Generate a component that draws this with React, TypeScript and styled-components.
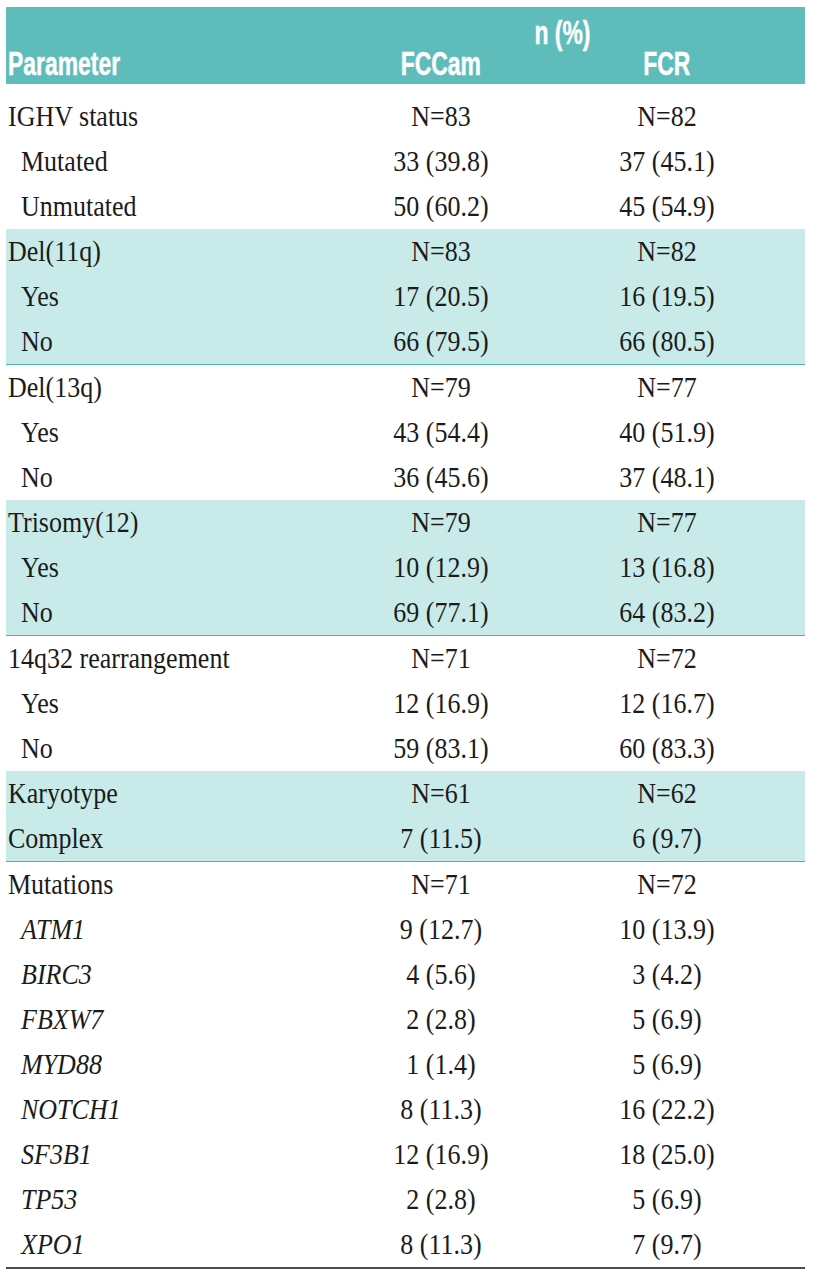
import React from "react";
import styled, { createGlobalStyle } from "styled-components";

const GlobalStyle = createGlobalStyle`
  html, body {
    margin: 0;
    padding: 0;
    background: #ffffff;
  }
`;

type Row = { label: string; a: string; b: string; level?: 0 | 1; italic?: boolean };
type Section = { band: boolean; line: boolean; rows: Row[] };

const sections: Section[] = [
  {
    band: false,
    line: false,
    rows: [
      { label: "IGHV status", a: "N=83", b: "N=82" },
      { label: "Mutated", a: "33 (39.8)", b: "37 (45.1)", level: 1 },
      { label: "Unmutated", a: "50 (60.2)", b: "45 (54.9)", level: 1 },
    ],
  },
  {
    band: true,
    line: true,
    rows: [
      { label: "Del(11q)", a: "N=83", b: "N=82" },
      { label: "Yes", a: "17 (20.5)", b: "16 (19.5)", level: 1 },
      { label: "No", a: "66 (79.5)", b: "66 (80.5)", level: 1 },
    ],
  },
  {
    band: false,
    line: false,
    rows: [
      { label: "Del(13q)", a: "N=79", b: "N=77" },
      { label: "Yes", a: "43 (54.4)", b: "40 (51.9)", level: 1 },
      { label: "No", a: "36 (45.6)", b: "37 (48.1)", level: 1 },
    ],
  },
  {
    band: true,
    line: true,
    rows: [
      { label: "Trisomy(12)", a: "N=79", b: "N=77" },
      { label: "Yes", a: "10 (12.9)", b: "13 (16.8)", level: 1 },
      { label: "No", a: "69 (77.1)", b: "64 (83.2)", level: 1 },
    ],
  },
  {
    band: false,
    line: false,
    rows: [
      { label: "14q32 rearrangement", a: "N=71", b: "N=72" },
      { label: "Yes", a: "12 (16.9)", b: "12 (16.7)", level: 1 },
      { label: "No", a: "59 (83.1)", b: "60 (83.3)", level: 1 },
    ],
  },
  {
    band: true,
    line: true,
    rows: [
      { label: "Karyotype", a: "N=61", b: "N=62" },
      { label: "Complex", a: "7 (11.5)", b: "6 (9.7)" },
    ],
  },
  {
    band: false,
    line: false,
    rows: [
      { label: "Mutations", a: "N=71", b: "N=72" },
      { label: "ATM1", a: "9 (12.7)", b: "10 (13.9)", level: 1, italic: true },
      { label: "BIRC3", a: "4 (5.6)", b: "3 (4.2)", level: 1, italic: true },
      { label: "FBXW7", a: "2 (2.8)", b: "5 (6.9)", level: 1, italic: true },
      { label: "MYD88", a: "1 (1.4)", b: "5 (6.9)", level: 1, italic: true },
      { label: "NOTCH1", a: "8 (11.3)", b: "16 (22.2)", level: 1, italic: true },
      { label: "SF3B1", a: "12 (16.9)", b: "18 (25.0)", level: 1, italic: true },
      { label: "TP53", a: "2 (2.8)", b: "5 (6.9)", level: 1, italic: true },
      { label: "XPO1", a: "8 (11.3)", b: "7 (9.7)", level: 1, italic: true },
    ],
  },
];

const COLS = "322px 226px 1fr";

const Table = styled.div`
  width: 799px;
  margin: 7px 0 0 6px;
  font-family: "Liberation Serif", "Times New Roman", serif;
  color: #1b1b1b;
  border-bottom: 2px solid #4a4a4a;
`;

const HeaderBar = styled.div`
  background: #5ebdbb;
  height: 77px;
  display: grid;
  grid-template-columns: ${COLS};
  grid-template-rows: 42px 35px;
  font-family: "Liberation Sans", Arial, sans-serif;
  font-weight: 700;
  font-size: 29px;
  color: #ffffff;
`;

const HeadText = styled.span<{ $origin: "left" | "center" }>`
  display: inline-block;
  transform: scale(0.79, 1.14);
  transform-origin: ${(p) => p.$origin} center;
  -webkit-text-stroke: 0.4px #ffffff;
`;

const HeadSpan = styled.div`
  grid-column: 2 / 4;
  grid-row: 1;
  align-self: end;
  text-align: center;
  padding-right: 9px;
  line-height: 32px;
`;

const HeadCell = styled.div<{ $align: "left" | "center"; $col: number; $pr?: number }>`
  grid-column: ${(p) => p.$col};
  grid-row: 2;
  text-align: ${(p) => p.$align};
  padding-left: ${(p) => (p.$align === "left" ? "2px" : "0")};
  padding-right: ${(p) => p.$pr ?? 0}px;
  line-height: 30px;
  align-self: start;
`;

const Group = styled.div<{ $band: boolean; $line: boolean; $padTop?: number }>`
  background: ${(p) => (p.$band ? "#c8ebea" : "transparent")};
  border-bottom: ${(p) => (p.$line ? "1.5px solid #52b2b0" : "0")};
  padding-top: ${(p) => p.$padTop ?? 0}px;
`;

const RowLine = styled.div`
  display: grid;
  grid-template-columns: ${COLS};
  height: 45px;
  align-items: center;
  font-size: 26px;
  line-height: 45px;
`;

const Label = styled.div<{ $level: number; $italic: boolean }>`
  padding-left: ${(p) => (p.$level ? 15 : 2)}px;
  font-style: ${(p) => (p.$italic ? "italic" : "normal")};
  white-space: nowrap;
`;

const Value = styled.div<{ $pr?: number }>`
  text-align: center;
  padding-right: ${(p) => p.$pr ?? 0}px;
  white-space: nowrap;
`;

const Text = styled.span<{ $origin: "left" | "center" }>`
  display: inline-block;
  transform: scale(1, 1.16);
  transform-origin: ${(p) => p.$origin} center;
`;

export default function App() {
  return (
    <>
      <GlobalStyle />
      <Table>
        <HeaderBar>
          <HeadSpan>
            <HeadText $origin="center">n (%)</HeadText>
          </HeadSpan>
          <HeadCell $align="left" $col={1}>
            <HeadText $origin="left">Parameter</HeadText>
          </HeadCell>
          <HeadCell $align="center" $col={2}>
            <HeadText $origin="center">FCCam</HeadText>
          </HeadCell>
          <HeadCell $align="center" $col={3} $pr={25}>
            <HeadText $origin="center">FCR</HeadText>
          </HeadCell>
        </HeaderBar>
        {sections.map((s, i) => (
          <Group key={i} $band={s.band} $line={s.line} $padTop={i === 0 ? 10 : 0}>
            {s.rows.map((r, j) => (
              <RowLine key={j}>
                <Label $level={r.level ?? 0} $italic={!!r.italic}>
                  <Text $origin="left">{r.label}</Text>
                </Label>
                <Value>
                  <Text $origin="center">{r.a}</Text>
                </Value>
                <Value $pr={25}>
                  <Text $origin="center">{r.b}</Text>
                </Value>
              </RowLine>
            ))}
          </Group>
        ))}
      </Table>
    </>
  );
}
